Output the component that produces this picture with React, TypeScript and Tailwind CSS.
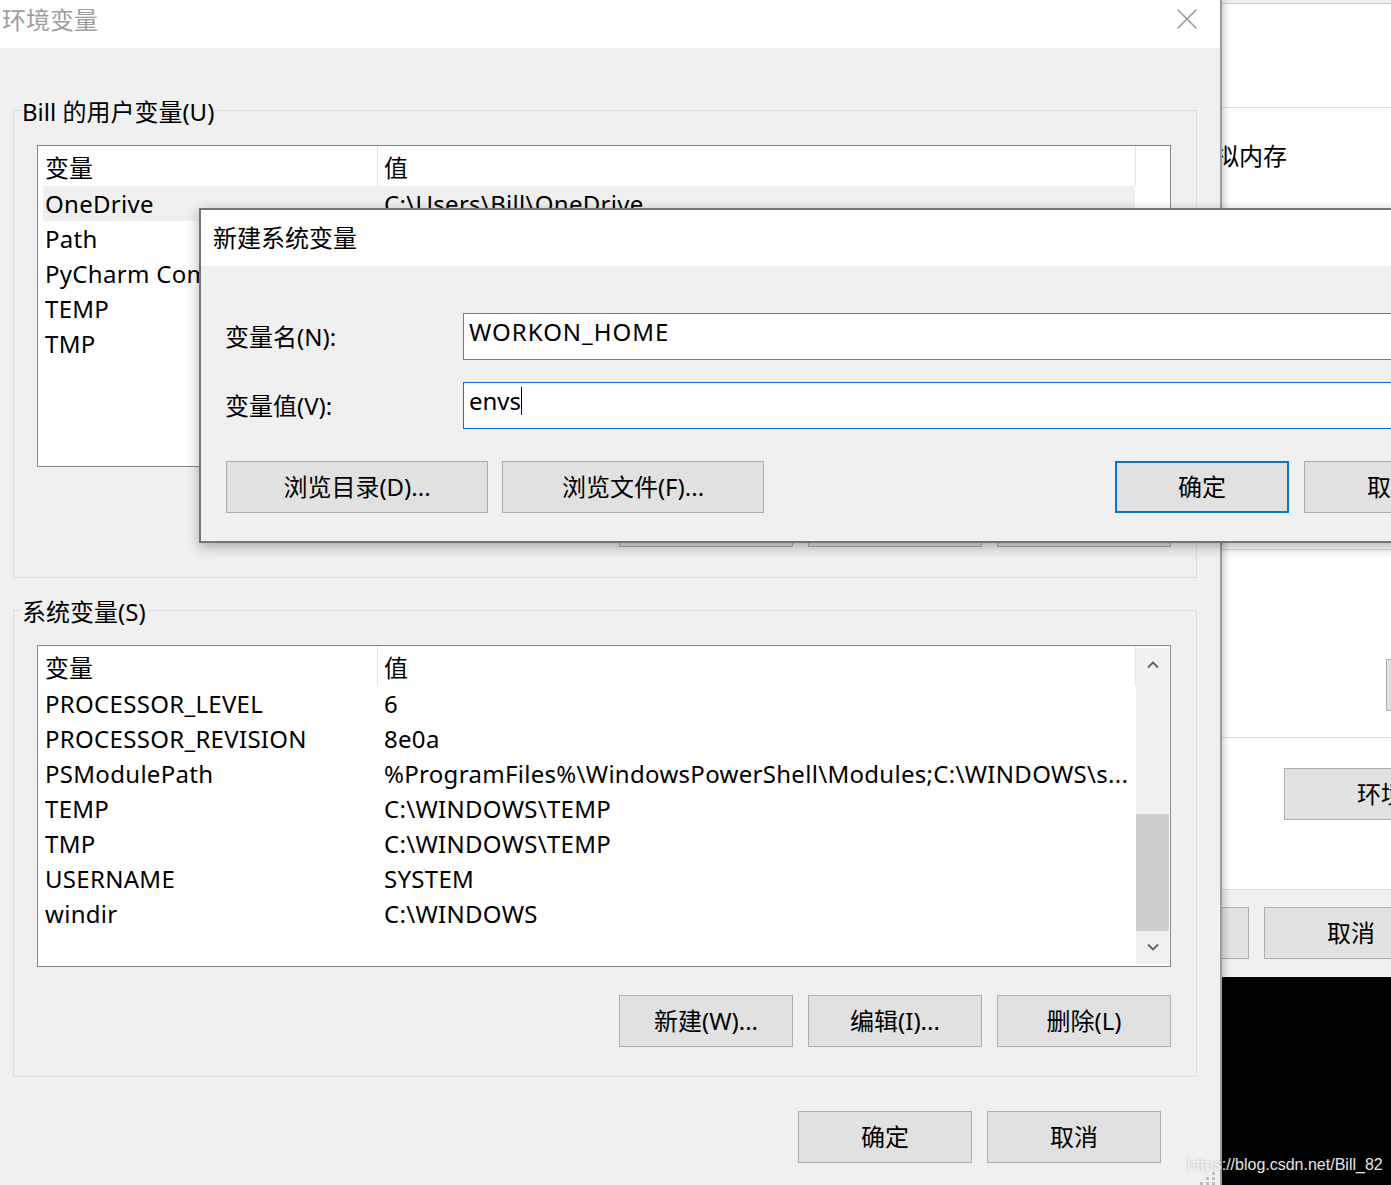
import React from "react";

// ---------------------------------------------------------------------------
// Data
// ---------------------------------------------------------------------------

const userVars: [string, string][] = [
  ["OneDrive", "C:\\Users\\Bill\\OneDrive"],
  ["Path", "C:\\Users\\Bill\\AppData\\Local\\Microsoft\\WindowsApps;"],
  ["PyCharm Community Edition", "C:\\Program Files\\JetBrains\\PyCharm Community Edition\\bin;"],
  ["TEMP", "C:\\Users\\Bill\\AppData\\Local\\Temp"],
  ["TMP", "C:\\Users\\Bill\\AppData\\Local\\Temp"],
];

const systemVars: [string, string][] = [
  ["PROCESSOR_LEVEL", "6"],
  ["PROCESSOR_REVISION", "8e0a"],
  ["PSModulePath", "%ProgramFiles%\\WindowsPowerShell\\Modules;C:\\WINDOWS\\s..."],
  ["TEMP", "C:\\WINDOWS\\TEMP"],
  ["TMP", "C:\\WINDOWS\\TEMP"],
  ["USERNAME", "SYSTEM"],
  ["windir", "C:\\WINDOWS"],
];

// ---------------------------------------------------------------------------
// Small pieces
// ---------------------------------------------------------------------------

function WinButton({
  children,
  className = "",
  focused = false,
}: {
  children?: React.ReactNode;
  className?: string;
  focused?: boolean;
}) {
  return (
    <button
      type="button"
      className={`flex h-[52px] shrink-0 items-center justify-center bg-[#e1e1e1] text-[24px] leading-[30px] text-black ${
        focused ? "border-2 border-[#0078d7]" : "border border-[#adadad]"
      } ${className}`}
    >
      {children}
    </button>
  );
}

function Chevron({ down = false }: { down?: boolean }) {
  return (
    <svg width="12" height="8" viewBox="0 0 12 8" className={down ? "rotate-180" : ""}>
      <path d="M1 6.5 L6 1.5 L11 6.5" fill="none" stroke="#606060" strokeWidth="1.8" />
    </svg>
  );
}

function Scrollbar() {
  return (
    <div className="my-[2px] mr-[1px] flex w-[33px] flex-col bg-[#f0f0f0]">
      <div className="flex h-[34px] items-center justify-center">
        <Chevron />
      </div>
      <div className="flex-1">
        <div className="mt-[132px] h-[117px] bg-[#cdcdcd]" />
      </div>
      <div className="flex h-[34px] items-center justify-center">
        <Chevron down />
      </div>
    </div>
  );
}

function VarList({
  rows,
  selected,
  scroll = false,
}: {
  rows: [string, string][];
  selected?: number;
  scroll?: boolean;
}) {
  return (
    <div className="ml-[16px] flex h-[322px] w-[1134px] border border-[#828790] bg-white">
      <div className="flex w-[1098px] flex-col overflow-hidden">
        {/* column header */}
        <div className="flex h-[40px] shrink-0 text-[24px] leading-[30px]">
          <div className="w-[340px] border-r border-[#e5e5e5] pl-[7px] pt-[7px]">变量</div>
          <div className="flex-1 border-r border-[#e5e5e5] pl-[6px] pt-[7px]">值</div>
        </div>
        {rows.map(([name, value], i) => (
          <div
            key={name}
            className={`ml-[5px] mr-[1px] flex h-[35px] shrink-0 text-[24px] leading-[35px] tracking-[0.3px] whitespace-nowrap ${
              i === selected ? "bg-[#efefef]" : ""
            }`}
          >
            <div className="w-[341px] shrink-0 overflow-hidden pl-[2px]">{name}</div>
            <div className="min-w-0 flex-1 overflow-hidden">{value}</div>
          </div>
        ))}
      </div>
      {scroll ? <Scrollbar /> : <div className="w-[34px]" />}
    </div>
  );
}

function GroupBox({
  title,
  className = "",
  children,
}: {
  title: string;
  className?: string;
  children: React.ReactNode;
}) {
  return (
    <fieldset
      className={`w-[1184px] border border-[#dcdcdc] pt-[18px] pr-[25px] pl-[7px] ${className}`}
    >
      <legend className="px-[1px] pt-[4px] text-[24px] leading-[30px]">{title}</legend>
      {children}
    </fieldset>
  );
}

function ListButtons() {
  return (
    <div className="mt-[28px] flex justify-end gap-[15px]">
      <WinButton className="w-[174px]">新建(W)...</WinButton>
      <WinButton className="w-[174px]">编辑(I)...</WinButton>
      <WinButton className="w-[174px]">删除(L)</WinButton>
    </div>
  );
}

// ---------------------------------------------------------------------------
// Windows
// ---------------------------------------------------------------------------

function SystemPropertiesWindow() {
  // the window behind, mostly covered; only its right strip shows
  return (
    <div className="absolute left-[1000px] top-0 flex h-[1185px] w-[420px] flex-col bg-black">
      <div className="h-[4px] shrink-0 border-b border-[#cfcfcf] bg-[#f0f0f0]" />
      <div className="flex shrink-0 flex-col bg-white">
        <div className="h-[104px] border-b border-[#dcdcdc]" />
        <div className="h-[442px] border-b border-[#dcdcdc] pl-[191px] pt-[33px] text-[24px] leading-[30px]">
          虚拟内存
        </div>
        <div className="h-[188px] border-b border-[#dcdcdc] pl-[386px] pt-[109px]">
          <WinButton className="w-[200px]" />
        </div>
        <div className="h-[152px] border-b border-[#dcdcdc] pl-[284px] pt-[30px]">
          <WinButton className="w-[294px]">环境变量(N)...</WinButton>
        </div>
      </div>
      <div className="flex h-[87px] shrink-0 gap-[15px] bg-[#f0f0f0] pl-[75px] pt-[17px]">
        <WinButton className="w-[174px]">确定</WinButton>
        <WinButton className="w-[174px]">取消</WinButton>
      </div>
      <div className="flex-1 bg-black" />
    </div>
  );
}

function EnvironmentWindow() {
  return (
    <div className="absolute left-0 top-0 z-10 flex h-[1185px] w-[1222px] flex-col border-r-2 border-[#9c9c9c] bg-[#f0f0f0] shadow-[3px_0_6px_rgba(0,0,0,0.18)]">
      {/* title bar */}
      <div className="flex h-[48px] shrink-0 items-start justify-between bg-white pl-[2px] pr-[22px]">
        <span className="pt-[5px] text-[24px] leading-[30px] text-[#9e9e9e]">环境变量</span>
        <svg width="22" height="22" viewBox="0 0 22 22" className="mt-[8px]">
          <path d="M1.5 1.5 L20.5 20.5 M20.5 1.5 L1.5 20.5" stroke="#9a9a9a" strokeWidth="1.6" />
        </svg>
      </div>

      <div className="flex flex-col pl-[13px]">
        <GroupBox title="Bill 的用户变量(U)" className="mt-[45px] pb-[30px]">
          <VarList rows={userVars} selected={0} />
          <ListButtons />
        </GroupBox>

        <GroupBox title="系统变量(S)" className="mt-[15px] pb-[29px]">
          <VarList rows={systemVars} scroll />
          <ListButtons />
        </GroupBox>

        <div className="mt-[34px] flex w-[1184px] justify-end gap-[15px] pr-[36px]">
          <WinButton className="w-[174px]">确定</WinButton>
          <WinButton className="w-[174px]">取消</WinButton>
        </div>
      </div>

      {/* size grip */}
      <svg width="18" height="14" viewBox="0 0 18 14" className="absolute bottom-0 right-[3px]">
        <g fill="#bdbdbd">
          <rect x="13" y="1" width="3" height="3" />
          <rect x="7" y="6" width="3" height="3" />
          <rect x="13" y="6" width="3" height="3" />
          <rect x="1" y="11" width="3" height="3" />
          <rect x="7" y="11" width="3" height="3" />
          <rect x="13" y="11" width="3" height="3" />
        </g>
      </svg>
    </div>
  );
}

function NewVariableDialog() {
  return (
    <div className="absolute left-[199px] top-[208px] z-20 w-[1305px] border-2 border-[#747474] bg-[#f0f0f0] shadow-[0_4px_12px_rgba(0,0,0,0.3)]">
      <div className="flex h-[56px] items-center bg-white pl-[12px] text-[24px] leading-[30px]">
        新建系统变量
      </div>

      <div className="flex flex-col px-[24px] pt-[47px] pb-[28px] text-[24px] leading-[30px]">
        <div className="flex items-center">
          <span className="w-[238px] shrink-0">变量名(N):</span>
          <div className="h-[47px] flex-1 border border-[#7a7a7a] bg-white pl-[5px] pt-[3px] tracking-[1px]">
            WORKON_HOME
          </div>
        </div>

        <div className="mt-[22px] flex items-center">
          <span className="w-[238px] shrink-0">变量值(V):</span>
          <div className="flex h-[47px] flex-1 items-start border border-[#0078d7] bg-white pl-[5px] pt-[3px]">
            <span>envs</span>
            <span className="mt-[1px] h-[28px] w-px bg-black" />
          </div>
        </div>

        <div className="mt-[32px] flex pl-[1px]">
          <WinButton className="w-[262px]">浏览目录(D)...</WinButton>
          <WinButton className="ml-[14px] w-[262px]">浏览文件(F)...</WinButton>
          <WinButton focused className="ml-auto w-[174px]">
            确定
          </WinButton>
          <WinButton className="ml-[15px] w-[174px]">取消</WinButton>
        </div>
      </div>
    </div>
  );
}

// ---------------------------------------------------------------------------
// App
// ---------------------------------------------------------------------------

export default function App() {
  return (
    <div className="relative h-[1185px] w-[1391px] overflow-hidden bg-white font-['Noto_Sans','Noto_Sans_CJK_SC',sans-serif] text-black">
      <SystemPropertiesWindow />
      <EnvironmentWindow />
      <NewVariableDialog />

      <span className="absolute left-[1187px] top-[1154px] z-30 font-['Liberation_Sans',Arial,sans-serif] text-[16px] leading-[22px] text-white/90 [text-shadow:0_0_2px_rgba(0,0,0,0.35)]">
        https://blog.csdn.net/Bill_82
      </span>
    </div>
  );
}
